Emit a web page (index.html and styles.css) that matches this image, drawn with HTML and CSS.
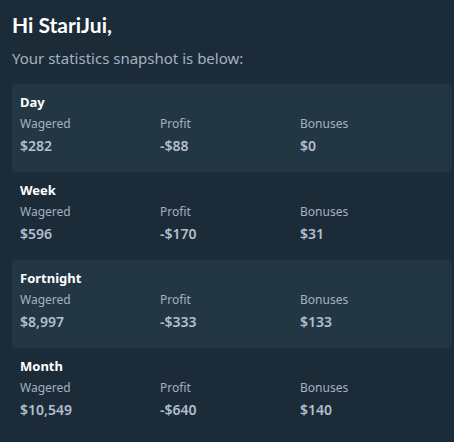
FILE: index.html
```html
<!DOCTYPE html>
<html>
<head>
<meta charset="utf-8">
<link rel="stylesheet" href="styles.css">
</head>
<body>
<div class="page">
  <h1 class="greeting">Hi StariJui,</h1>
  <p class="intro">Your statistics snapshot is below:</p>
  <div class="periods">
    <section class="period shaded">
      <h2 class="period-title">Day</h2>
      <div class="stats">
        <div class="stat"><span class="label">Wagered</span><span class="value">$282</span></div>
        <div class="stat"><span class="label">Profit</span><span class="value">-$88</span></div>
        <div class="stat"><span class="label">Bonuses</span><span class="value">$0</span></div>
      </div>
    </section>
    <section class="period">
      <h2 class="period-title">Week</h2>
      <div class="stats">
        <div class="stat"><span class="label">Wagered</span><span class="value">$596</span></div>
        <div class="stat"><span class="label">Profit</span><span class="value">-$170</span></div>
        <div class="stat"><span class="label">Bonuses</span><span class="value">$31</span></div>
      </div>
    </section>
    <section class="period shaded">
      <h2 class="period-title">Fortnight</h2>
      <div class="stats">
        <div class="stat"><span class="label">Wagered</span><span class="value">$8,997</span></div>
        <div class="stat"><span class="label">Profit</span><span class="value">-$333</span></div>
        <div class="stat"><span class="label">Bonuses</span><span class="value">$133</span></div>
      </div>
    </section>
    <section class="period">
      <h2 class="period-title">Month</h2>
      <div class="stats">
        <div class="stat"><span class="label">Wagered</span><span class="value">$10,549</span></div>
        <div class="stat"><span class="label">Profit</span><span class="value">-$640</span></div>
        <div class="stat"><span class="label">Bonuses</span><span class="value">$140</span></div>
      </div>
    </section>
  </div>
</div>
</body>
</html>
```

FILE: styles.css
```css
html, body {
  margin: 0;
  padding: 0;
  background: #1c2b38;
}
body {
  font-family: "Noto Sans", "Open Sans", sans-serif;
  color: #a4b1c1;
}
.page {
  width: 440px;
  padding: 12px 0 0 12px;
}
.greeting {
  margin: 0;
  font-family: Lato, "Noto Sans", sans-serif;
  font-size: 21px;
  line-height: 26px;
  font-weight: 700;
  color: #ffffff;
}
.intro {
  margin: 10px 0 0 0;
  font-size: 15px;
  line-height: 20px;
  color: #a4b1c1;
}
.periods {
  margin-top: 16px;
  display: flex;
  flex-direction: column;
}
.period {
  height: 88px;
  box-sizing: border-box;
  padding: 9px 8px 0 8px;
  border-radius: 4px;
}
.period.shaded {
  background: #233644;
}
.period-title {
  margin: 0;
  font-size: 13px;
  line-height: 18px;
  font-weight: 700;
  color: #ffffff;
}
.stats {
  display: grid;
  grid-template-columns: repeat(3, 140px);
  margin-top: 5px;
}
.stat {
  display: flex;
  flex-direction: column;
  gap: 5px;
}
.label {
  font-size: 12px;
  line-height: 16px;
  color: #a4b1c1;
}
.value {
  font-size: 14px;
  line-height: 18px;
  font-weight: 600;
  color: #b3bfcd;
}
```
